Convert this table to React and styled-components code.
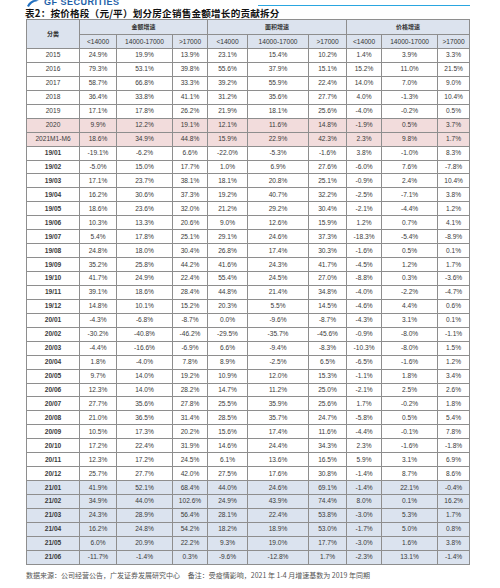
import styled, { createGlobalStyle } from 'styled-components'

const GlobalStyle = createGlobalStyle`
  html, body {
    margin: 0;
    padding: 0;
    background: #fff;
  }
  body {
    font-family: "Liberation Sans", Arial, sans-serif;
  }
`

const Page = styled.div`
  width: 500px;
  height: 588px;
  overflow: hidden;
  background: #fff;
`

const TopStrip = styled.div`
  height: 7px;
  display: flex;
  align-items: flex-end;
  padding: 0 30px 0 26px;
  gap: 8px;
`

const Logo = styled.div`
  display: flex;
  align-items: flex-end;
  gap: 4px;
  margin-top: -6px;
  color: #1f5fa8;
  font-family: "Liberation Sans", Arial, sans-serif;
  font-weight: bold;
  font-size: 9px;
  line-height: 9px;
  letter-spacing: 0.5px;
`

const Rule = styled.div`
  flex: 1;
  margin-left: 130px;
  height: 1px;
  margin-bottom: 1px;
  background: #2aa6e0;
`

const Title = styled.h1`
  margin: 1px 0 0 25px;
  height: 11px;
  font-family: "Noto Sans CJK SC", sans-serif;
  font-weight: 700;
  font-size: 9.6px;
  line-height: 11px;
  color: #111;
  letter-spacing: 0.2px;
`

const Table = styled.table`
  margin-left: 26px;
  border-collapse: collapse;
  table-layout: fixed;
  width: 443px;
  border: 1px solid #888;
  color: #3a3a3a;
`

const Cell = styled.td`
  border: 1px solid #8e8e8e;
  padding: 0;
  text-align: center;
  vertical-align: middle;
  font-size: 6.6px;
  line-height: 6px;
  white-space: nowrap;
  font-weight: ${p => (p.$bold ? 700 : 400)};
`

const HeadCell = styled.th`
  border: 1px solid #8e8e8e;
  padding: 0;
  background: #dce3ee;
  text-align: center;
  vertical-align: middle;
  font-size: ${p => (p.$cjk ? '6px' : '6.6px')};
  font-weight: ${p => (p.$cjk ? 700 : 400)};
  font-family: ${p => (p.$cjk ? '"Noto Sans CJK SC", sans-serif' : 'inherit')};
  color: #333;
  line-height: 6px;
`

const Row = styled.tr`
  height: 13.94px;
  background: ${p => (p.$tone === 'pink' ? '#f2dcdc' : p.$tone === 'blue' ? '#dbe3ef' : '#fff')};
`

const HeadRow = styled.tr`
  height: ${p => p.$h}px;
`

const Footer = styled.p`
  margin: 5px 0 0 26px;
  font-family: "Noto Sans CJK SC", sans-serif;
  font-size: 7px;
  line-height: 10px;
  color: #555;
  white-space: nowrap;
`

const widths = [53, 37, 56, 35, 40, 61, 38, 35, 56, 32]

const raw = `2015|24.9%|19.9%|13.9%|23.1%|15.4%|10.2%|1.4%|3.9%|3.3%
2016|79.3%|53.1%|39.8%|55.6%|37.9%|15.1%|15.2%|11.0%|21.5%
2017|58.7%|66.8%|33.3%|39.2%|55.9%|22.4%|14.0%|7.0%|9.0%
2018|36.4%|33.8%|41.1%|31.2%|35.6%|27.7%|4.0%|-1.3%|10.4%
2019|17.1%|17.8%|26.2%|21.9%|18.1%|25.6%|-4.0%|-0.2%|0.5%
2020|9.9%|12.2%|19.1%|12.1%|11.6%|14.8%|-1.9%|0.5%|3.7%
2021M1-M6|18.6%|34.9%|44.8%|15.9%|22.9%|42.3%|2.3%|9.8%|1.7%
19/01|-19.1%|-6.2%|6.6%|-22.0%|-5.3%|-1.6%|3.8%|-1.0%|8.3%
19/02|-5.0%|15.0%|17.7%|1.0%|6.9%|27.6%|-6.0%|7.6%|-7.8%
19/03|17.1%|23.7%|38.1%|18.1%|20.8%|25.1%|-0.9%|2.4%|10.4%
19/04|16.2%|30.6%|37.3%|19.2%|40.7%|32.2%|-2.5%|-7.1%|3.8%
19/05|18.6%|23.6%|32.0%|21.2%|29.2%|30.4%|-2.1%|-4.4%|1.2%
19/06|10.3%|13.3%|20.6%|9.0%|12.6%|15.9%|1.2%|0.7%|4.1%
19/07|5.4%|17.8%|25.1%|29.1%|24.6%|37.3%|-18.3%|-5.4%|-8.9%
19/08|24.8%|18.0%|30.4%|26.8%|17.4%|30.3%|-1.6%|0.5%|0.1%
19/09|35.2%|25.8%|44.2%|41.6%|24.3%|41.7%|-4.5%|1.2%|1.7%
19/10|41.7%|24.9%|22.4%|55.4%|24.5%|27.0%|-8.8%|0.3%|-3.6%
19/11|39.1%|18.6%|28.4%|44.8%|21.4%|34.8%|-4.0%|-2.2%|-4.7%
19/12|14.8%|10.1%|15.2%|20.3%|5.5%|14.5%|-4.6%|4.4%|0.6%
20/01|-4.3%|-6.8%|-8.7%|0.0%|-9.6%|-8.7%|-4.3%|3.1%|0.1%
20/02|-30.2%|-40.8%|-46.2%|-29.5%|-35.7%|-45.6%|-0.9%|-8.0%|-1.1%
20/03|-4.4%|-16.6%|-6.9%|6.6%|-9.4%|-8.3%|-10.3%|-8.0%|1.5%
20/04|1.8%|-4.0%|7.8%|8.9%|-2.5%|6.5%|-6.5%|-1.6%|1.2%
20/05|9.7%|14.0%|19.2%|10.9%|12.0%|15.3%|-1.1%|1.8%|3.4%
20/06|12.3%|14.0%|28.2%|14.7%|11.2%|25.0%|-2.1%|2.5%|2.6%
20/07|27.7%|35.6%|27.8%|25.5%|35.9%|25.6%|1.7%|-0.2%|1.8%
20/08|21.0%|36.5%|31.4%|28.5%|35.7%|24.7%|-5.8%|0.5%|5.4%
20/09|10.5%|17.3%|20.2%|15.6%|17.4%|11.6%|-4.4%|-0.1%|7.8%
20/10|17.2%|22.4%|31.9%|14.6%|24.4%|34.3%|2.3%|-1.6%|-1.8%
20/11|12.3%|17.2%|24.5%|6.1%|13.6%|16.5%|5.9%|3.1%|6.9%
20/12|25.7%|27.7%|42.0%|27.5%|17.6%|30.8%|-1.4%|8.7%|8.6%
21/01|41.9%|52.1%|68.4%|44.0%|24.6%|69.1%|-1.4%|22.1%|-0.4%
21/02|34.9%|44.0%|102.6%|24.9%|43.9%|74.4%|8.0%|0.1%|16.2%
21/03|24.3%|28.9%|56.4%|28.1%|22.4%|53.8%|-3.0%|5.3%|1.7%
21/04|16.2%|24.8%|54.2%|18.2%|18.9%|53.0%|-1.7%|5.0%|0.8%
21/05|6.0%|20.9%|22.2%|9.3%|19.0%|17.7%|-3.0%|1.6%|3.8%
21/06|-11.7%|-1.4%|0.3%|-9.6%|-12.8%|1.7%|-2.3%|13.1%|-1.4%`

const rows = raw.split('\n').map(line => line.split('|'))

const toneOf = label => {
  if (label === '2020' || label === '2021M1-M6') return 'pink'
  if (label.startsWith('21/')) return 'blue'
  return null
}

const groups = ['金额增速', '面积增速', '价格增速']
const bands = ['<14000', '14000-17000', '>17000']

const GfMark = () => (
  <svg width="14" height="8" viewBox="0 0 14 8">
    <path d="M1 7 C4 1, 9 0, 13 2 C9 2, 5 4, 3 8 Z" fill="#1f6fc0" />
  </svg>
)

export default function App() {
  return (
    <Page>
      <GlobalStyle />
      <TopStrip>
        <Logo>
          <GfMark />
          <span>GF SECURITIES</span>
        </Logo>
        <Rule />
      </TopStrip>
      <Title>表2：按价格段（元/平）划分房企销售金额增长的贡献拆分</Title>
      <Table>
        <colgroup>
          {widths.map((w, i) => (
            <col key={i} style={{ width: w }} />
          ))}
        </colgroup>
        <thead>
          <HeadRow $h={15}>
            <HeadCell rowSpan={2} $cjk>分类</HeadCell>
            {groups.map(g => (
              <HeadCell key={g} colSpan={3} $cjk>{g}</HeadCell>
            ))}
          </HeadRow>
          <HeadRow $h={14}>
            {groups.map(g =>
              bands.map(b => <HeadCell key={g + b}>{b}</HeadCell>)
            )}
          </HeadRow>
        </thead>
        <tbody>
          {rows.map(([label, ...vals]) => (
            <Row key={label} $tone={toneOf(label)}>
              <Cell $bold={label.includes('/')}>{label}</Cell>
              {vals.map((v, i) => (
                <Cell key={i}>{v}</Cell>
              ))}
            </Row>
          ))}
        </tbody>
      </Table>
      <Footer>
        数据来源：公司经营公告，广发证券发展研究中心&nbsp;&nbsp;&nbsp;&nbsp;&nbsp;备注：受疫情影响，2021 年 1-4 月增速基数为 2019 年同期
      </Footer>
    </Page>
  )
}
